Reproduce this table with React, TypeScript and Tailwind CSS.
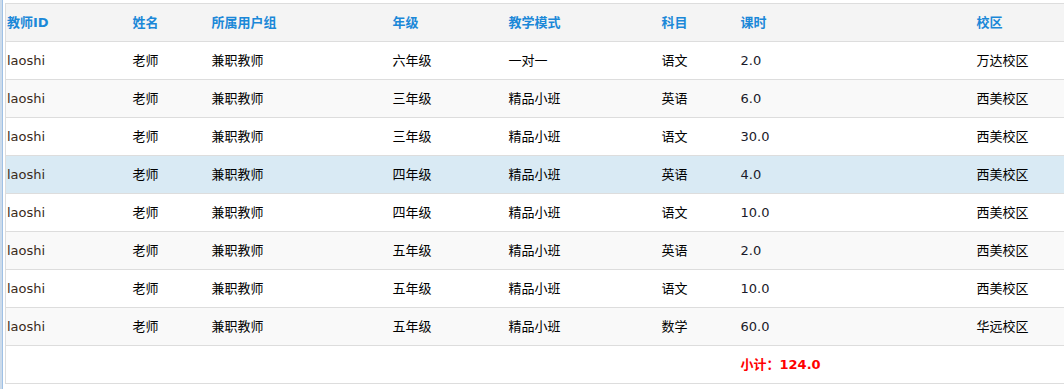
import React from 'react';

// 课时明细表
const rows = [
  { id: 'laoshi', name: '老师', group: '兼职教师', grade: '六年级', mode: '一对一', subject: '语文', hours: '2.0', campus: '万达校区' },
  { id: 'laoshi', name: '老师', group: '兼职教师', grade: '三年级', mode: '精品小班', subject: '英语', hours: '6.0', campus: '西美校区' },
  { id: 'laoshi', name: '老师', group: '兼职教师', grade: '三年级', mode: '精品小班', subject: '语文', hours: '30.0', campus: '西美校区' },
  { id: 'laoshi', name: '老师', group: '兼职教师', grade: '四年级', mode: '精品小班', subject: '英语', hours: '4.0', campus: '西美校区' },
  { id: 'laoshi', name: '老师', group: '兼职教师', grade: '四年级', mode: '精品小班', subject: '语文', hours: '10.0', campus: '西美校区' },
  { id: 'laoshi', name: '老师', group: '兼职教师', grade: '五年级', mode: '精品小班', subject: '英语', hours: '2.0', campus: '西美校区' },
  { id: 'laoshi', name: '老师', group: '兼职教师', grade: '五年级', mode: '精品小班', subject: '语文', hours: '10.0', campus: '西美校区' },
  { id: 'laoshi', name: '老师', group: '兼职教师', grade: '五年级', mode: '精品小班', subject: '数学', hours: '60.0', campus: '华远校区' },
];

const headers = ['教师ID', '姓名', '所属用户组', '年级', '教学模式', '科目', '课时', '校区'];
const widths = ['w-[126px]', 'w-[79px]', 'w-[181px]', 'w-[116px]', 'w-[153px]', 'w-[79px]', 'w-[236px]', ''];

export default function App() {
  const total = rows.reduce((sum, r) => sum + parseFloat(r.hours), 0).toFixed(1);

  return (
    <div
      className="flex h-[389px] w-[1064px] bg-white text-[13px] text-[#222] overflow-hidden"
      style={{ fontFamily: '"DejaVu Sans", "Noto Sans CJK SC", sans-serif' }}
    >
      {/* 左侧边线 */}
      <div className="w-[2px] bg-[#cddbea]" />
      <div className="w-[1px] bg-[#9fc1e6]" />

      <div className="flex-1 pl-[2px] pt-[3px]">
        <table className="w-full table-fixed border-collapse border-l border-t border-[#dddddd]">
          <colgroup>
            {widths.map((w, i) => (
              <col key={i} className={w} />
            ))}
          </colgroup>
          <thead>
            <tr className="h-[38px] bg-[#f4f4f4] border-b border-[#dddddd]">
              {headers.map((h) => (
                <th key={h} className="pl-[1px] text-left font-bold text-[#1b88d8]">
                  {h}
                </th>
              ))}
            </tr>
          </thead>
          <tbody>
            {rows.map((r, i) => (
              <tr
                key={i}
                className={`h-[38px] border-b border-[#dddddd] ${
                  i === 3 ? 'bg-[#d9eaf4]' : i % 2 === 1 ? 'bg-[#f9f9f9]' : 'bg-white'
                }`}
              >
                <td className="pl-[1px] text-[#3a2a1a]">{r.id}</td>
                <td className="pl-[1px] text-black">{r.name}</td>
                <td className="pl-[1px] text-black">{r.group}</td>
                <td className="pl-[1px] text-black">{r.grade}</td>
                <td className="pl-[1px] text-black">{r.mode}</td>
                <td className="pl-[1px] text-black">{r.subject}</td>
                <td className="pl-[1px] text-[#1a1a2a]">{r.hours}</td>
                <td className="pl-[1px] text-black">{r.campus}</td>
              </tr>
            ))}
            {/* 小计 */}
            <tr className="h-[38px] border-b border-[#dddddd] bg-white">
              <td colSpan={6} />
              <td colSpan={2} className="pl-[1px] font-bold text-[#ff0000]">
                小计：{total}
              </td>
            </tr>
          </tbody>
        </table>
      </div>
    </div>
  );
}
